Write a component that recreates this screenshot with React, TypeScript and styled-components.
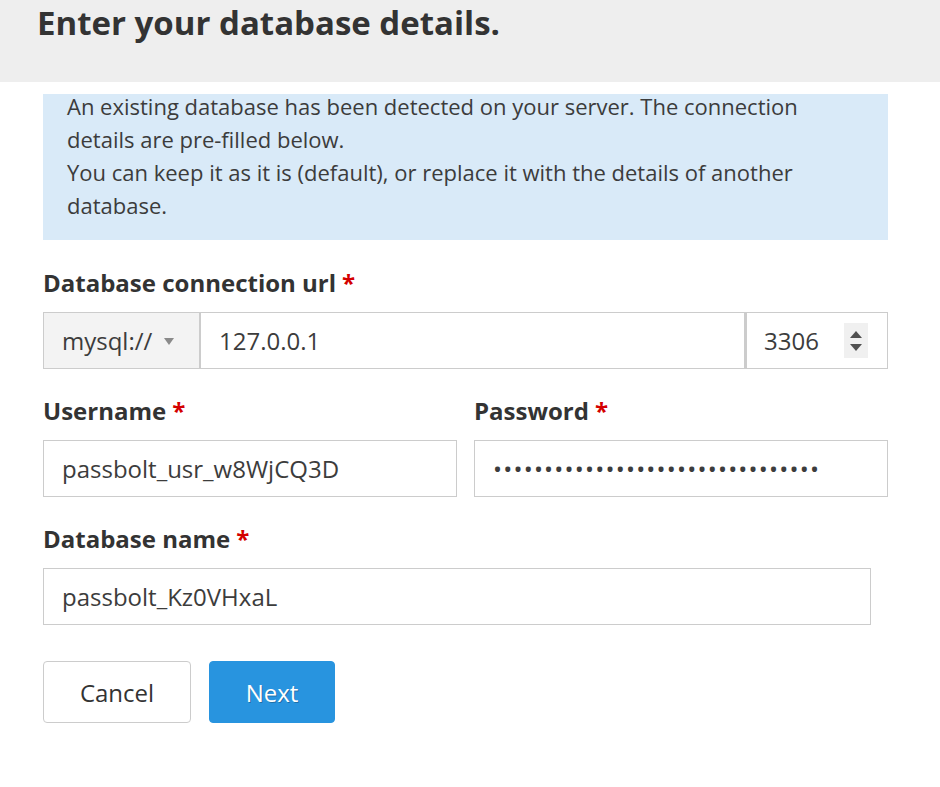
import * as React from "react";
import styled, { createGlobalStyle } from "styled-components";

const GlobalStyle = createGlobalStyle`
  html, body {
    margin: 0;
    padding: 0;
    background: #ffffff;
  }
  body {
    font-family: "Open Sans", "Noto Sans", sans-serif;
    color: #333333;
  }
  * {
    box-sizing: border-box;
  }
`;

const Header = styled.header`
  height: 82px;
  background: #eeeeee;
  padding: 0 37px;
`;

const Title = styled.h1`
  margin: 0;
  font-size: 33px;
  line-height: 46px;
  font-weight: 700;
  color: #333333;
`;

const Main = styled.main`
  padding: 12px 52px 0 43px;
`;

const Notice = styled.div`
  display: flow-root;
  background: #d9eaf8;
  padding: 0 50px 18px 24px;
  font-size: 22px;
  line-height: 33px;
  color: #3c3c3c;
  margin-bottom: 29px;
`;

const NoticeText = styled.p`
  margin: -4px 0 0;
`;

const Field = styled.div<{ $width?: string; $last?: boolean }>`
  display: flex;
  flex-direction: column;
  width: ${(p) => p.$width ?? "100%"};
  margin-bottom: ${(p) => (p.$last ? "0" : "28px")};
`;

const Label = styled.label`
  font-size: 24px;
  line-height: 28px;
  font-weight: 700;
  color: #333333;
  margin-bottom: 15px;
`;

const Required = styled.span`
  color: #d40000;
  margin-left: 6px;
`;

const UrlRow = styled.div`
  display: flex;
  height: 57px;
`;

const SchemeSelect = styled.div`
  width: 158px;
  flex: none;
  display: flex;
  align-items: center;
  gap: 12px;
  padding-left: 18px;
  background: #f3f3f3;
  border: 1px solid #cccccc;
  border-right: 2px solid #cccccc;
  font-size: 24px;
  color: #3c3c3c;
`;

const Caret = styled.span`
  width: 0;
  height: 0;
  border-left: 5px solid transparent;
  border-right: 5px solid transparent;
  border-top: 7px solid #8a8a8a;
  margin-top: 2px;
`;

const TextInput = styled.input<{ $flex?: boolean; $noLeft?: boolean; $dots?: boolean }>`
  height: 57px;
  width: 100%;
  flex: ${(p) => (p.$flex ? "1 1 auto" : "none")};
  min-width: 0;
  margin: 0;
  padding: 0 18px;
  border: 1px solid #cccccc;
  border-left-width: ${(p) => (p.$noLeft ? "0" : "1px")};
  border-radius: 0;
  background: #ffffff;
  font-family: "Open Sans", "Noto Sans", sans-serif;
  font-size: 24px;
  letter-spacing: ${(p) => (p.$dots ? "1.2px" : "normal")};
  color: #3c3c3c;
  outline: none;
`;

const PortBox = styled.div`
  width: 143px;
  flex: none;
  display: flex;
  align-items: center;
  padding-right: 19px;
  border: 1px solid #cccccc;
  border-left: 2px solid #cccccc;
  background: #ffffff;
`;

const PortInput = styled.input`
  flex: 1 1 auto;
  min-width: 0;
  height: 100%;
  margin: 0;
  padding: 0 0 0 17px;
  border: none;
  background: transparent;
  font-family: "Open Sans", "Noto Sans", sans-serif;
  font-size: 24px;
  color: #3c3c3c;
  outline: none;
  -moz-appearance: textfield;
  &::-webkit-inner-spin-button,
  &::-webkit-outer-spin-button {
    -webkit-appearance: none;
    margin: 0;
  }
`;

const Spinner = styled.div`
  width: 24px;
  height: 35px;
  flex: none;
  display: flex;
  flex-direction: column;
  align-items: center;
  justify-content: center;
  gap: 6px;
  background: #f0f0f0;
`;

const Arrow = styled.span<{ $up?: boolean }>`
  width: 0;
  height: 0;
  border-left: 6px solid transparent;
  border-right: 6px solid transparent;
  ${(p) => (p.$up ? "border-bottom: 7px solid #505050;" : "border-top: 7px solid #505050;")}
`;

const Columns = styled.div`
  display: grid;
  grid-template-columns: 1fr 1fr;
  column-gap: 17px;
`;

const Actions = styled.div`
  display: flex;
  gap: 18px;
  margin-top: 36px;
`;

const Button = styled.button<{ $primary?: boolean }>`
  height: 62px;
  width: ${(p) => (p.$primary ? "126px" : "148px")};
  padding: 0;
  border-radius: 4px;
  border: 1px solid ${(p) => (p.$primary ? "#2894df" : "#cccccc")};
  background: ${(p) => (p.$primary ? "#2894df" : "#ffffff")};
  color: ${(p) => (p.$primary ? "#ffffff" : "#333333")};
  text-shadow: ${(p) => (p.$primary ? "1px 1px 0 rgba(0,0,0,0.25)" : "none")};
  font-family: "Open Sans", "Noto Sans", sans-serif;
  font-size: 24px;
  cursor: pointer;
`;

export default function App() {
  return (
    <>
      <GlobalStyle />
      <Header>
        <Title>Enter your database details.</Title>
      </Header>
      <Main>
        <Notice>
          <NoticeText>
            An existing database has been detected on your server. The connection details are
            pre-filled below.
            <br />
            You can keep it as it is (default), or replace it with the details of another
            database.
          </NoticeText>
        </Notice>

        <Field>
          <Label>
            Database connection url<Required>*</Required>
          </Label>
          <UrlRow>
            <SchemeSelect>
              mysql://
              <Caret />
            </SchemeSelect>
            <TextInput $flex $noLeft readOnly defaultValue="127.0.0.1" />
            <PortBox>
              <PortInput type="number" readOnly defaultValue="3306" />
              <Spinner>
                <Arrow $up />
                <Arrow />
              </Spinner>
            </PortBox>
          </UrlRow>
        </Field>

        <Columns>
          <Field>
            <Label>
              Username<Required>*</Required>
            </Label>
            <TextInput readOnly defaultValue="passbolt_usr_w8WjCQ3D" />
          </Field>
          <Field>
            <Label>
              Password<Required>*</Required>
            </Label>
            <TextInput $dots type="password" readOnly defaultValue="abcdefghijklmnopqrstuvwxyz012345" />
          </Field>
        </Columns>

        <Field $width="828px" $last>
          <Label>
            Database name<Required>*</Required>
          </Label>
          <TextInput readOnly defaultValue="passbolt_Kz0VHxaL" />
        </Field>

        <Actions>
          <Button>Cancel</Button>
          <Button $primary>Next</Button>
        </Actions>
      </Main>
    </>
  );
}
